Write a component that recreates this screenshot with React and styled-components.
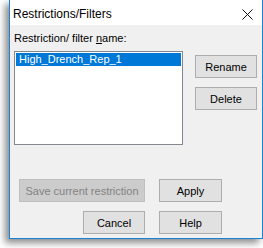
import React from 'react';
import styled, { createGlobalStyle } from 'styled-components';

const GlobalStyle = createGlobalStyle`
  html, body {
    margin: 0;
    padding: 0;
    background: #ffffff;
  }
  body {
    font-family: 'Liberation Sans', Arial, sans-serif;
  }
`;

const Page = styled.div`
  width: 263px;
  height: 248px;
  overflow: hidden;
  padding-left: 9px;
  box-sizing: border-box;
`;

const Window = styled.div`
  width: 254px;
  box-sizing: border-box;
  border: 1px solid #1883d7;
  border-top: none;
  background: #f0f0f0;
  box-shadow: -4px 4px 7px rgba(0, 0, 0, 0.45);
`;

const TitleBar = styled.div`
  height: 25px;
  background: #ffffff;
  display: flex;
  align-items: center;
  justify-content: space-between;
  padding: 0 9px 0 3px;
`;

const Title = styled.span`
  font-size: 12px;
  color: #000;
  margin-top: 2px;
`;

const Close = styled.svg`
  width: 11px;
  height: 11px;
  margin-top: 3px;
`;

const Body = styled.div`
  padding: 7px 5px 4px 4px;
`;

const Label = styled.div`
  font-size: 11px;
  line-height: 13px;
  color: #000;
  margin-bottom: 6px;
  u {
    text-decoration: underline;
  }
`;

const Top = styled.div`
  display: flex;
  gap: 12px;
`;

const List = styled.div`
  width: 169px;
  height: 94px;
  box-sizing: border-box;
  border: 1px solid #828790;
  background: #ffffff;
  padding: 1px;
`;

const Item = styled.div`
  height: 13px;
  line-height: 13px;
  font-size: 11px;
  padding-left: 3px;
  color: ${p => (p.$selected ? '#ffffff' : '#000')};
  background: ${p => (p.$selected ? '#0078d7' : 'transparent')};
`;

const Side = styled.div`
  display: flex;
  flex-direction: column;
  gap: 9px;
  padding-top: 4px;
`;

const Button = styled.div`
  width: ${p => p.$w || 62}px;
  height: 23px;
  box-sizing: border-box;
  border: 1px solid ${p => (p.$disabled ? '#bfbfbf' : '#adadad')};
  background: ${p => (p.$disabled ? '#cccccc' : '#e1e1e1')};
  color: ${p => (p.$disabled ? '#838383' : '#000')};
  font-size: 11px;
  display: flex;
  align-items: center;
  justify-content: center;
  justify-self: ${p => p.$end ? 'end' : 'start'};
`;

const Bottom = styled.div`
  display: grid;
  grid-template-columns: 126px 63px;
  column-gap: 14px;
  row-gap: 9px;
  margin-top: 34px;
  padding-left: 5px;
`;

const App = () => {
  return (
    <Page>
      <GlobalStyle />
      <Window>
        <TitleBar>
          <Title>Restrictions/Filters</Title>
          <Close viewBox="0 0 11 11">
            <path d="M0.5 0.5 L10.5 10.5 M10.5 0.5 L0.5 10.5" stroke="#111" strokeWidth="1" fill="none" />
          </Close>
        </TitleBar>
        <Body>
          <Label>
            Restriction/ filter <u>n</u>ame:
          </Label>
          <Top>
            <List>
              <Item $selected>High_Drench_Rep_1</Item>
            </List>
            <Side>
              <Button>Rename</Button>
              <Button>Delete</Button>
            </Side>
          </Top>
          <Bottom>
            <Button $w={126} $disabled>Save current restriction</Button>
            <Button $w={63}>Apply</Button>
            <Button $end>Cancel</Button>
            <Button $w={63}>Help</Button>
          </Bottom>
        </Body>
      </Window>
    </Page>
  );
};

export default App;
